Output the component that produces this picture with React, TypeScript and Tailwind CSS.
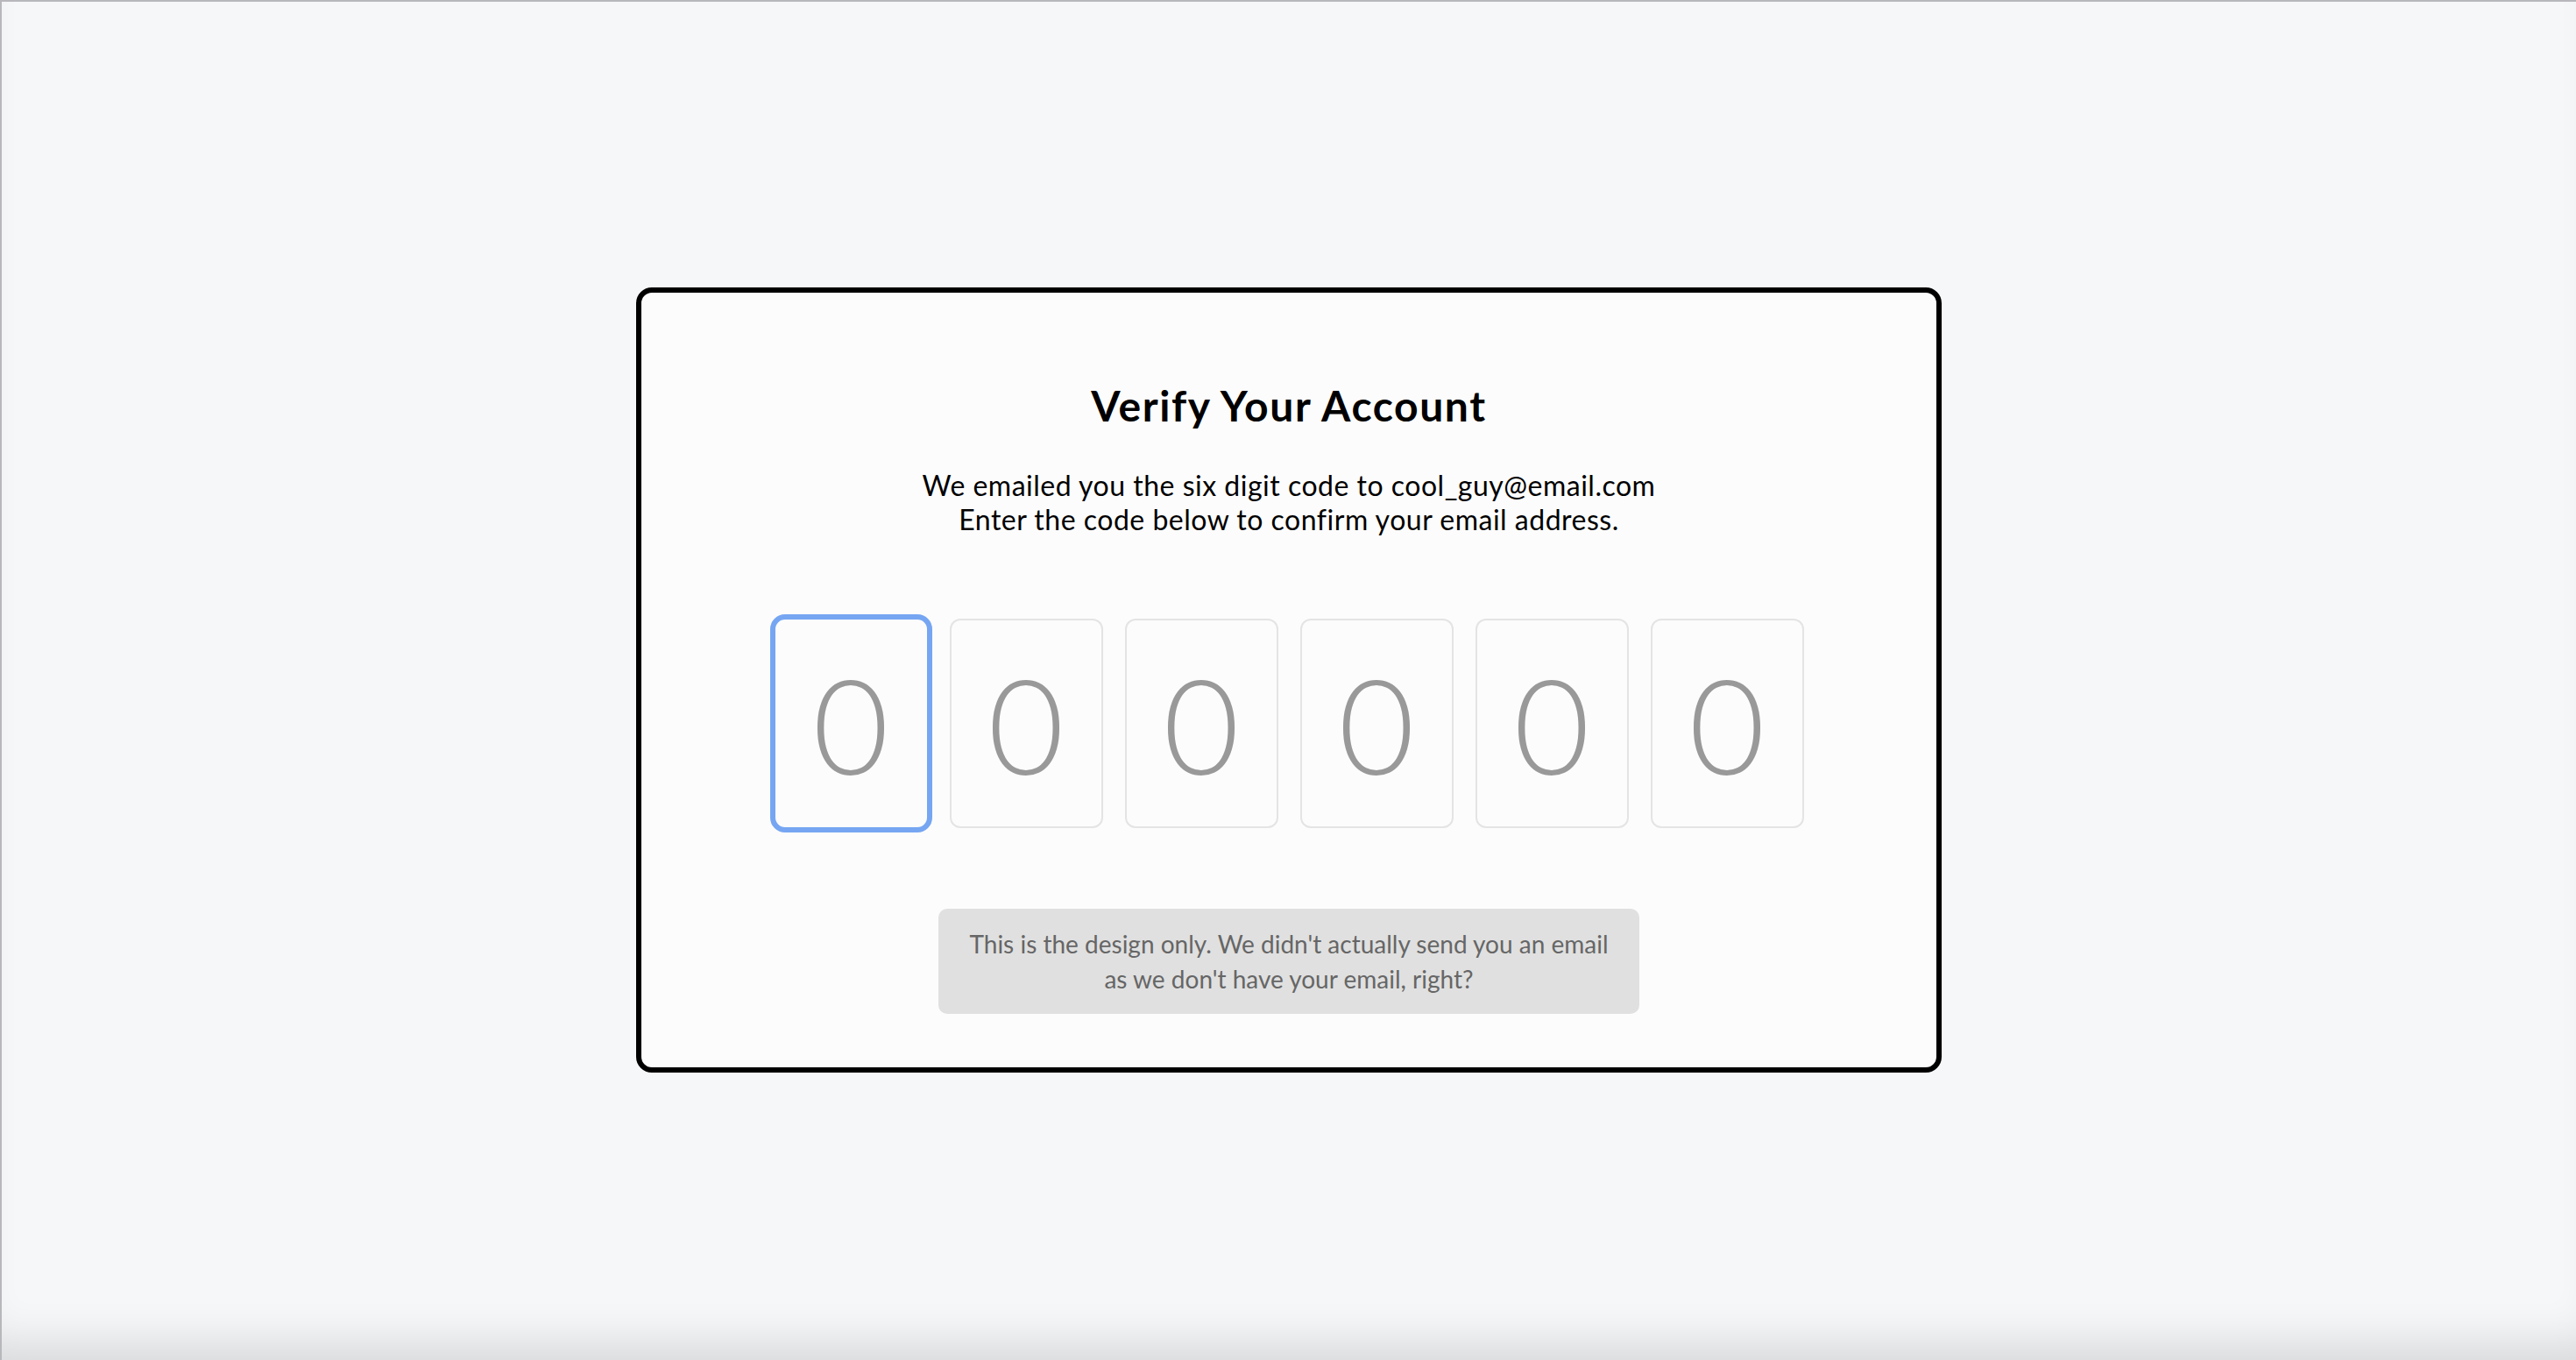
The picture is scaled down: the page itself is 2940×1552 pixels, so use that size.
import { useState } from 'react'

const font = { fontFamily: 'Lato, "Noto Sans", sans-serif' }

export default function App() {
  const [code, setCode] = useState<string[]>(['', '', '', '', '', ''])
  const [focused, setFocused] = useState(0)

  const handleChange = (index: number, value: string) => {
    const digit = value.replace(/\D/g, '').slice(-1)
    setCode(prev => prev.map((d, i) => (i === index ? digit : d)))
  }

  return (
    <div
      className="min-h-screen h-[1552px] w-full flex items-start justify-center bg-[#f6f7f9] border-t-2 border-l-2 border-[#b8b8bc] shadow-[inset_0_-50px_50px_-30px_rgba(0,0,0,0.12)]"
      style={font}
    >
      {/* Card */}
      <div className="mt-[326px] w-[1490px] rounded-[18px] border-[6px] border-black bg-[#fcfcfc] pt-[100px] pb-[61px] flex flex-col items-center">
        <h1 className="text-[48px] leading-[58px] font-bold text-black tracking-[1.6px]">
          Verify Your Account
        </h1>

        <p className="mt-[42px] text-[32px] leading-[39px] text-black text-center tracking-[0.5px]">
          We emailed you the six digit code to cool_guy@email.com
          <br />
          Enter the code below to confirm your email address.
        </p>

        {/* Code inputs */}
        <div className="mt-[94px] flex gap-[25px]">
          {code.map((digit, i) => (
            <input
              key={i}
              value={digit}
              placeholder="0"
              maxLength={1}
              onChange={e => handleChange(i, e.target.value)}
              onFocus={() => setFocused(i)}
              className={
                'w-[175px] h-[239px] rounded-[12px] border-2 border-[#e4e4e4] bg-[#fcfcfc] text-center text-[150px] font-light text-[#999999] placeholder:text-[#999999] outline-none ' +
                (focused === i ? 'outline-[6px] outline-solid outline-[#76a6f2] outline-offset-[-1px] border-transparent' : '')
              }
              style={font}
            />
          ))}
        </div>

        {/* Disclaimer */}
        <div className="mt-[92px] w-[800px] rounded-[10px] bg-[#e0e0e0] py-[20px] text-center text-[28px] leading-[40px] text-[#666666]">
          This is the design only. We didn't actually send you an email
          <br />
          as we don't have your email, right?
        </div>
      </div>
    </div>
  )
}
